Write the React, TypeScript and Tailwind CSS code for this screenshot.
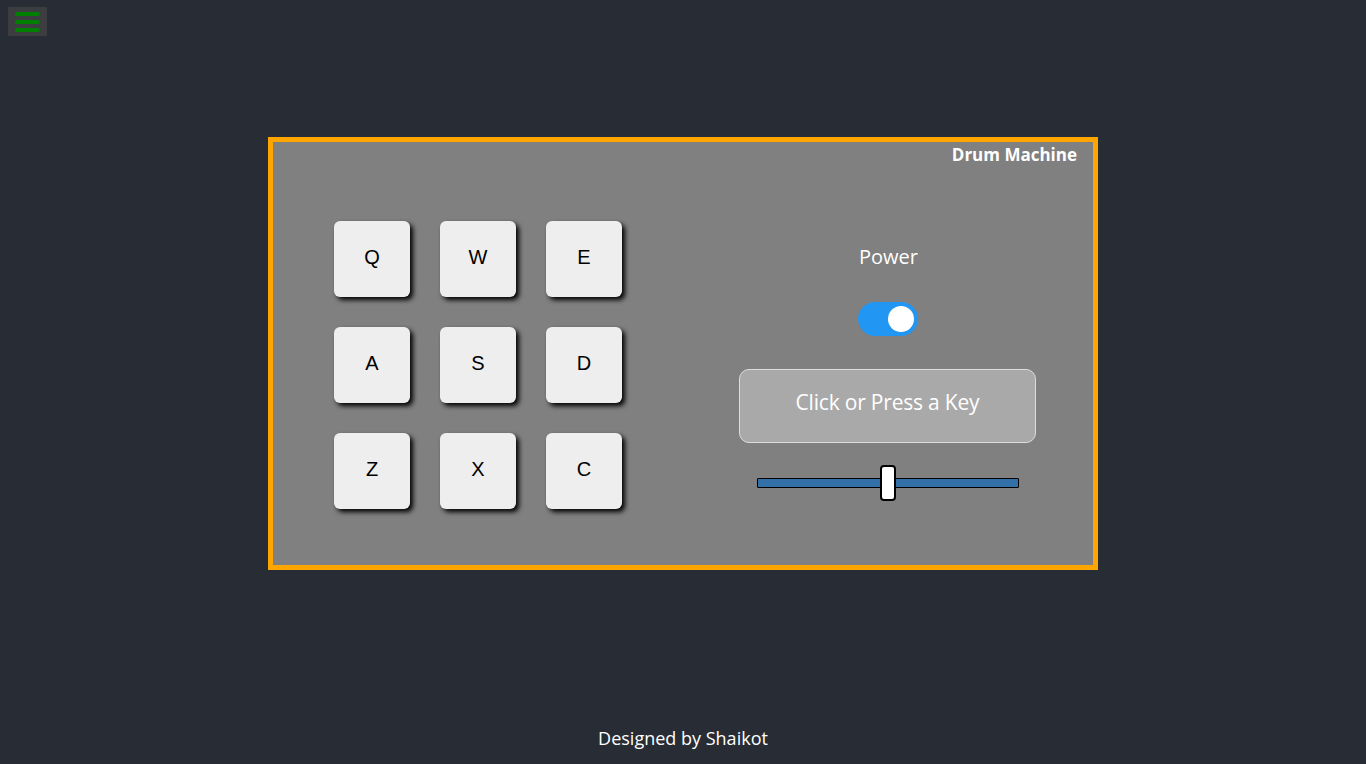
import React, { useState } from 'react';

const KEYS = ['Q', 'W', 'E', 'A', 'S', 'D', 'Z', 'X', 'C'];

const DrumPad: React.FC<{ label: string; onHit: (k: string) => void }> = ({ label, onHit }) => (
  <button
    onClick={() => onHit(label)}
    className="w-[76px] h-[76px] pb-[4px] rounded-[6px] bg-[#eeeeee] shadow-[3px_3px_5px_#000] text-[20px] text-black font-['Liberation_Sans',Arial,sans-serif] flex items-center justify-center"
  >
    {label}
  </button>
);

const App: React.FC = () => {
  const [power, setPower] = useState(true);
  const [display, setDisplay] = useState('Click or Press a Key');
  const [volume] = useState(0.5);

  return (
    <div className="relative min-h-[764px] bg-[#282c34] flex flex-col font-['Open_Sans','Noto_Sans',sans-serif] text-white">
      {/* Menu toggle */}
      <button className="absolute left-[8px] top-[7px] w-[39px] h-[29px] bg-[#3b3d41] flex flex-col items-center justify-center gap-[4px]">
        <span className="block w-[25px] h-[4px] rounded-[2px] bg-[#008000]" />
        <span className="block w-[25px] h-[4px] rounded-[2px] bg-[#008000]" />
        <span className="block w-[25px] h-[4px] rounded-[2px] bg-[#008000]" />
      </button>

      <div className="flex-1 flex justify-center pt-[137px]">
        <div className="w-[830px] h-[433px] border-[5px] border-[#ffa500] bg-[#808080] flex flex-col">
          <div className="pt-[1px] pr-[16px] text-right text-[17px] leading-[23px] font-bold">Drum Machine</div>

          <div className="flex mt-[55px]">
            {/* Pads */}
            <div className="ml-[61px] grid grid-cols-3 gap-[30px] w-[288px]">
              {KEYS.map((k) => (
                <DrumPad key={k} label={k} onHit={(x) => power && setDisplay(x)} />
              ))}
            </div>

            {/* Controls */}
            <div className="ml-[117px] w-[297px] pt-[22px] flex flex-col items-center">
              <div className="text-[20px] leading-[27px] pl-[2px]">Power</div>

              <button
                onClick={() => setPower(!power)}
                className={`mt-[32px] w-[60px] h-[34px] rounded-full flex items-center px-[4px] ${power ? 'bg-[#2196f3] justify-end' : 'bg-[#cccccc] justify-start'}`}
              >
                <span className="block w-[26px] h-[26px] rounded-full bg-white" />
              </button>

              <div className="mt-[33px] w-[297px] h-[74px] pb-[7px] rounded-[10px] border border-[#dddddd] bg-[#a9a9a9] flex items-center justify-center text-[21px] tracking-[-0.2px]">
                {display}
              </div>

              {/* Volume */}
              <div className="mt-[22px] w-[262px] h-[36px] relative flex items-center">
                <div className="w-full h-[10px] bg-[#3370a8] border border-black rounded-[1px]" />
                <div
                  className="absolute top-0 w-[16px] h-[36px] bg-white border-2 border-black rounded-[4px]"
                  style={{ left: `${volume * 262 - 8}px` }}
                />
              </div>
            </div>
          </div>
        </div>
      </div>

      <footer className="h-[38px] text-center text-[18px] leading-[24px]">Designed by Shaikot</footer>
    </div>
  );
};

export default App;
